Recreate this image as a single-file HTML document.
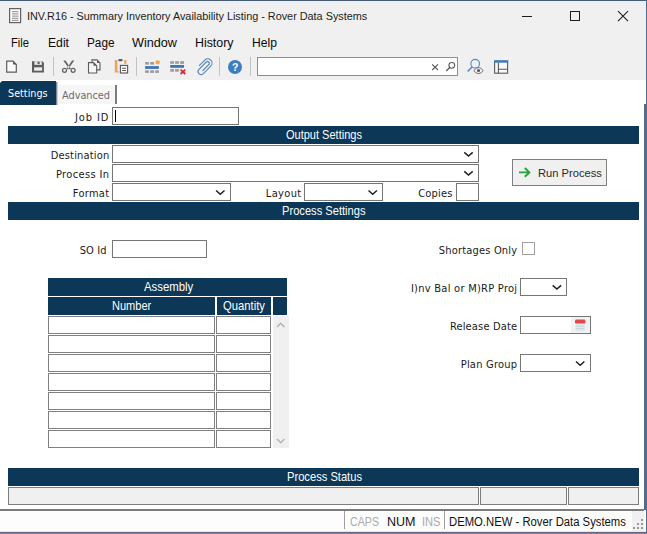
<!DOCTYPE html>
<html><head><meta charset="utf-8"><title>INV.R16 - Summary Inventory Availability Listing</title>
<style>
html,body{margin:0;padding:0}
body{width:647px;height:534px;position:relative;overflow:hidden;background:#f0f0f0;font-family:'Liberation Sans',sans-serif;font-size:12px;color:#111}
.a{position:absolute}
.t{position:absolute;white-space:nowrap;line-height:1;transform-origin:0 0;display:inline-block}
.bar{position:absolute;background:#0c3756;color:#fff;text-align:center;font-size:12px;line-height:18px;height:18px;white-space:nowrap}
.inp{position:absolute;background:#fff;border:1px solid #767676;box-sizing:border-box}
.cell{position:absolute;background:#fff;border:1px solid #808080;box-sizing:border-box;height:18px}
.sb{position:absolute;background:#f0f0f0;border:1px solid #7d7d7d;box-sizing:border-box;height:18px;top:487px}
.sep{position:absolute;width:1px;top:57px;height:19px;background:#c3c3c3}
</style></head><body>
<!-- window frame -->
<div class="a" style="left:0;top:0;width:647px;height:1px;background:#4a5b76"></div>
<div class="a" style="left:0;top:1px;width:646px;height:2px;background:#e9f0fa"></div>
<div class="a" style="left:643px;top:3px;width:2px;height:77px;background:#edf2ef"></div>
<div class="a" style="left:645px;top:3px;width:1px;height:77px;background:#e4eefa"></div>
<div class="a" style="left:646px;top:0;width:1px;height:534px;background:#4d6b9c"></div>

<!-- title bar icon + window controls -->
<svg class="a" style="left:8px;top:7px" width="15" height="17" viewBox="0 0 15 17"><rect x="1.600" y="1.600" width="11" height="14" fill="#fcfcfc" stroke="#606060" stroke-width="1.200"/><path d="M4 4.700h6.500M4 6.900h6.500M4 9.100h6.500M4 11.300h6.500M4 13.400h6.500" stroke="#8a8a8a" stroke-width="1"/></svg>
<svg class="a" style="left:516px;top:6px" width="120" height="20" viewBox="0 0 120 20"><path d="M6 10.500h10" stroke="#1e1e1e" stroke-width="1"/><rect x="54.500" y="5.500" width="9" height="9" fill="none" stroke="#1e1e1e" stroke-width="1"/><path d="M102 5.200l10 10M112 5.200l-10 10" stroke="#1e1e1e" stroke-width="1.100"/></svg>

<!-- toolbar icons -->
<div class="inp" style="left:257px;top:57px;width:201px;height:19px;border-color:#8e8e8e"></div>
<svg class="a" style="left:0;top:56px" width="520" height="22" viewBox="0 56 520 22">
 <!-- new -->
 <path d="M6.700 61.200h6.300l3.300 3.300v7.700h-9.600z" fill="#fbfbfb" stroke="#5c5c5c" stroke-width="1.200"/><path d="M13 61.200v3.300h3.300z" fill="#5c5c5c"/>
 <!-- save -->
 <path d="M32 61.200h10.400l1.500 1.500v9.800h-11.900z" fill="#5c5c5c"/><rect x="34.400" y="61.200" width="7.400" height="3.700" fill="#e6e6e6"/><rect x="37.600" y="61.700" width="2" height="2.400" fill="#5c5c5c"/><rect x="34.100" y="67.300" width="8" height="3.400" fill="#ededed"/>
 <!-- scissors -->
 <path d="M63.300 60.600l2.300 0l5.300 8.100l-1.200 .900zM74.300 60.600l-2.300 0l-5.300 8.100l1.200 .900z" fill="#626262"/><circle cx="64.500" cy="70.300" r="2" fill="none" stroke="#626262" stroke-width="1.200"/><circle cx="73.100" cy="70.300" r="2" fill="none" stroke="#626262" stroke-width="1.200"/>
 <!-- copy -->
 <path d="M92 59.900h5l3 3v7h-8z" fill="#f4f4f4" stroke="#5c5c5c" stroke-width="1.100"/><path d="M97 59.900v3h3z" fill="#5c5c5c"/>
 <path d="M88.500 62.600h5l3.200 3.200v7.200h-8.200z" fill="#f6f6f6" stroke="#5c5c5c" stroke-width="1.100"/><path d="M93.500 62.600v3.200h3.200z" fill="#5c5c5c"/>
 <!-- paste -->
 <path d="M114.800 60h2.600v11.300h1.400v1.200h-4z" fill="#eaa35c"/><rect x="124.200" y="60" width="2.200" height="3.800" fill="#eaa35c"/><rect x="118.300" y="59" width="4.300" height="2.300" rx="1" fill="#556070"/>
 <rect x="120.400" y="65.400" width="7.200" height="7.600" fill="#fafafa" stroke="#555" stroke-width="1.100"/><path d="M122.200 68.200h3.800M122.200 70.500h3.800" stroke="#555" stroke-width="1.100"/>
 <!-- grid insert -->
 <g fill="#9c9c9c"><rect x="145.100" y="62" width="3.800" height="2.600"/><rect x="150.200" y="62" width="3.800" height="2.600"/><rect x="145.100" y="70.300" width="3.800" height="2.600"/><rect x="150.200" y="70.300" width="3.800" height="2.600"/><rect x="155.100" y="70.300" width="3.800" height="2.600"/></g>
 <rect x="145.100" y="66.100" width="13.800" height="2.800" fill="#3f76b5"/><rect x="155.600" y="60.400" width="4" height="3.800" rx="0.800" fill="#f2a648"/>
 <!-- grid delete -->
 <g fill="#9c9c9c"><rect x="170.200" y="61.200" width="3.800" height="2.600"/><rect x="175.100" y="61.200" width="3.800" height="2.600"/><rect x="180.100" y="61.200" width="3.900" height="2.600"/><rect x="170.200" y="69.100" width="3.800" height="2.600"/><rect x="175.100" y="69.100" width="3.800" height="2.600"/></g>
 <rect x="170.200" y="65" width="13.800" height="2.800" fill="#3f76b5"/><path d="M180.500 69.700l4.800 4.300M185.300 69.700l-4.800 4.300" stroke="#d3283a" stroke-width="1.700"/>
 <!-- paperclip -->
 <path d="M202.500 70.800l6.300-6.300a1.700 1.700 0 0 0-2.500-2.500l-7.300 7.300a3 3 0 0 0 4.300 4.300l7.500-7.500a4.200 4.200 0 0 0-6-6l-5.800 5.800" fill="none" stroke="#5a86be" stroke-width="1.150"/>
 <!-- help -->
 <circle cx="235" cy="67" r="7" fill="#3d7ec0"/>
 <!-- search clear + magnifier -->
 <path d="M432.200 64.400l5.800 5.600M438 64.400l-5.800 5.600" stroke="#555" stroke-width="1.050"/>
 <circle cx="451.800" cy="65.300" r="2.900" fill="none" stroke="#555" stroke-width="1.050"/><path d="M449.700 67.500l-3.400 3.500" stroke="#555" stroke-width="1.250"/>
 <!-- find -->
 <circle cx="475.200" cy="63.700" r="4.300" fill="none" stroke="#5689cb" stroke-width="1.150"/><path d="M472 67l-4.300 4.500" stroke="#5689cb" stroke-width="1.600"/>
 <path d="M473.800 70.600q4.700-6 9.400 0q-4.700 6-9.400 0z" fill="#fbfbfb" stroke="#6a6a6a" stroke-width="1"/><circle cx="478.500" cy="70.600" r="1.600" fill="#5a5a5a"/>
 <!-- layout -->
 <rect x="494.600" y="61.200" width="13" height="12" fill="#f8f8f8" stroke="#5a5a5a" stroke-width="1.100"/><rect x="494" y="60.300" width="14.200" height="2.400" fill="#3a7bbf"/><path d="M498.400 62.700v10.500M498.400 69.300h9.200" stroke="#5a5a5a" stroke-width="1.100"/>
</svg>
<div class="sep" style="left:53px"></div>
<div class="sep" style="left:136px"></div>
<div class="sep" style="left:219px"></div>
<div class="sep" style="left:250px"></div>

<!-- content -->
<div class="a" style="left:0;top:80px;width:644px;height:429px;background:#fff"></div>
<div class="a" style="left:644px;top:80px;width:2px;height:24px;background:#fff"></div>
<div class="a" style="left:644px;top:104px;width:1px;height:406px;background:#5d6c7c"></div>
<div class="a" style="left:645px;top:104px;width:1px;height:406px;background:#546b8e"></div>

<!-- tabs -->
<div class="a" style="left:0;top:81px;width:56px;height:24px;background:#0c3756;clip-path:polygon(2px 0,100% 0,100% 100%,0 100%,0 2px)"></div>
<div class="a" style="left:56px;top:82px;width:1px;height:23px;background:#7f8991"></div>
<div class="a" style="left:57px;top:82px;width:1px;height:23px;background:#ccd0d4"></div>
<div class="a" style="left:58px;top:85px;width:57px;height:19px;background:#f6f6f6"></div>
<div class="a" style="left:115px;top:85px;width:2px;height:19px;background:#7c7c7c"></div>

<!-- Job ID -->
<div class="inp" style="left:112px;top:107px;width:127px;height:18px"></div>
<div class="a" style="left:115px;top:110px;width:1px;height:12px;background:#000"></div>

<div class="bar" style="left:8px;top:126px;width:631px"></div>
<div class="inp" style="left:112px;top:145px;width:367px;height:18px"></div>
<div class="inp" style="left:112px;top:164px;width:367px;height:18px"></div>
<div class="inp" style="left:112px;top:183px;width:119px;height:18px"></div>
<div class="inp" style="left:304px;top:183px;width:79px;height:18px"></div>
<div class="inp" style="left:456px;top:183px;width:23px;height:18px"></div>
<div class="bar" style="left:8px;top:202px;width:631px"></div>

<!-- run process -->
<div class="a" style="left:512px;top:159px;width:95px;height:27px;background:#f0f0f0;border:1px solid #7f7f7f;box-sizing:border-box"></div>
<svg class="a" style="left:518px;top:166px" width="14" height="13" viewBox="0 0 14 13"><path d="M1 6.400h10M6.800 2l4.600 4.400l-4.600 4.400" fill="none" stroke="#27a23a" stroke-width="1.900"/></svg>

<div class="inp" style="left:112px;top:240px;width:95px;height:18px"></div>
<div class="inp" style="left:522px;top:242px;width:13px;height:13px;border-color:#a0a0a0"></div>
<div class="inp" style="left:520px;top:278px;width:47px;height:18px"></div>
<div class="inp" style="left:520px;top:316px;width:71px;height:18px"></div>
<div class="inp" style="left:520px;top:354px;width:71px;height:18px"></div>
<!-- calendar -->
<div class="a" style="left:571px;top:317px;width:19px;height:16px;background:#f1f2f4"></div>
<svg class="a" style="left:574px;top:318px" width="13" height="14" viewBox="0 0 13 14"><rect x="1.500" y="4" width="9.500" height="9.300" fill="#e2e7eb"/><rect x="1" y="1.600" width="10.400" height="3.800" rx="1.200" fill="#e0484d"/><path d="M2.500 8h7.500M2.500 10.500h7.500" stroke="#c5d3db" stroke-width="1"/></svg>

<!-- chevrons -->
<svg class="a" style="left:0;top:140px" width="647" height="240" viewBox="0 140 647 240"><g fill="none" stroke="#1f1f1f" stroke-width="1.500">
<path d="M464.3 152.4l4.200 3.700l4.200-3.700"/>
<path d="M464.3 171.4l4.200 3.700l4.200-3.700"/>
<path d="M216.1 190.5l4.200 3.700l4.200-3.700"/>
<path d="M368.5 190.5l4.200 3.700l4.200-3.700"/>
<path d="M552.7 285.4l4.200 3.700l4.200-3.700"/>
<path d="M576.0 361.5l4.200 3.700l4.200-3.700"/>
</g></svg>

<!-- assembly table -->
<div class="bar" style="left:48px;top:278px;width:239px"></div>
<div class="bar" style="left:48px;top:297px;width:167px"></div>
<div class="bar" style="left:217px;top:297px;width:54px"></div>
<div class="bar" style="left:273px;top:297px;width:14px"></div>
<div class="a" style="left:273px;top:316px;width:16px;height:132px;background:#f0f0f0"></div>
<svg class="a" style="left:275px;top:320px" width="12" height="126" viewBox="0 0 12 126"><g fill="none" stroke="#b4b4b4" stroke-width="1.600"><path d="M2 7l3.700-3.700l3.700 3.700"/><path d="M2 119l3.700 3.700l3.700-3.700"/></g></svg>
<div class="cell" style="left:48px;top:316px;width:167px"></div><div class="cell" style="left:216px;top:316px;width:55px"></div>
<div class="cell" style="left:48px;top:335px;width:167px"></div><div class="cell" style="left:216px;top:335px;width:55px"></div>
<div class="cell" style="left:48px;top:354px;width:167px"></div><div class="cell" style="left:216px;top:354px;width:55px"></div>
<div class="cell" style="left:48px;top:373px;width:167px"></div><div class="cell" style="left:216px;top:373px;width:55px"></div>
<div class="cell" style="left:48px;top:392px;width:167px"></div><div class="cell" style="left:216px;top:392px;width:55px"></div>
<div class="cell" style="left:48px;top:411px;width:167px"></div><div class="cell" style="left:216px;top:411px;width:55px"></div>
<div class="cell" style="left:48px;top:430px;width:167px"></div><div class="cell" style="left:216px;top:430px;width:55px"></div>

<!-- process status -->
<div class="bar" style="left:8px;top:468px;width:631px"></div>
<div class="sb" style="left:8px;width:471px"></div>
<div class="sb" style="left:480px;width:87px"></div>
<div class="sb" style="left:568px;width:71px"></div>

<!-- bottom status bar -->
<div class="a" style="left:0;top:509px;width:644px;height:2px;background:#7b7b7b"></div>
<div class="a" style="left:0;top:511px;width:646px;height:21px;background:#fdfdfd"></div>
<div class="a" style="left:632px;top:511px;width:12px;height:21px;background:#f0f0f0"></div>
<div class="a" style="left:0;top:531px;width:646px;height:1px;background:#e6e6f1"></div>
<div class="a" style="left:0;top:532px;width:647px;height:1px;background:#68627f"></div>
<div class="a" style="left:0;top:533px;width:647px;height:1px;background:#85809d"></div>
<div class="a" style="left:344px;top:511px;width:1px;height:18px;background:#a0a0a0"></div>
<div class="a" style="left:444px;top:511px;width:1px;height:18px;background:#a0a0a0"></div>
<svg class="a" style="left:632px;top:518px" width="12" height="12" viewBox="0 0 12 12"><g fill="#9b9b9b"><rect x="9" y="1" width="2" height="2"/><rect x="5" y="5" width="2" height="2"/><rect x="9" y="5" width="2" height="2"/><rect x="1" y="9" width="2" height="2"/><rect x="5" y="9" width="2" height="2"/><rect x="9" y="9" width="2" height="2"/></g></svg>

<span class="t" id="t0" style="left:27.3px;top:11.2px;font-family:'Liberation Sans',sans-serif;font-size:11px;color:#1c1c1c;transform:scaleX(0.9849)">INV.R16 - Summary Inventory Availability Listing - Rover Data Systems</span>
<span class="t" id="t1" style="left:11.2px;top:36.8px;font-family:'Liberation Sans',sans-serif;font-size:12.3px;color:#0a0a0a;transform:scaleX(0.9078)">File</span>
<span class="t" id="t2" style="left:47.5px;top:36.8px;font-family:'Liberation Sans',sans-serif;font-size:12.3px;color:#0a0a0a;transform:scaleX(0.9904)">Edit</span>
<span class="t" id="t3" style="left:86.5px;top:36.8px;font-family:'Liberation Sans',sans-serif;font-size:12.3px;color:#0a0a0a;transform:scaleX(0.9576)">Page</span>
<span class="t" id="t4" style="left:131.5px;top:36.8px;font-family:'Liberation Sans',sans-serif;font-size:12.3px;color:#0a0a0a;transform:scaleX(1.0286)">Window</span>
<span class="t" id="t5" style="left:194.5px;top:36.8px;font-family:'Liberation Sans',sans-serif;font-size:12.3px;color:#0a0a0a;transform:scaleX(1.0061)">History</span>
<span class="t" id="t6" style="left:252.0px;top:36.8px;font-family:'Liberation Sans',sans-serif;font-size:12.3px;color:#0a0a0a;transform:scaleX(0.9843)">Help</span>
<span class="t" id="t7" style="left:8.1px;top:88.0px;font-family:'DejaVu Sans Condensed','Liberation Sans',sans-serif;font-size:11px;color:#fff;transform:scaleX(0.9751)">Settings</span>
<span class="t" id="t8" style="left:61.6px;top:89.7px;font-family:'DejaVu Sans Condensed','Liberation Sans',sans-serif;font-size:11px;color:#6b6b6b;transform:scaleX(0.9821)">Advanced</span>
<span class="t" id="t9" style="left:75.0px;top:112.0px;font-family:'DejaVu Sans Condensed','Liberation Sans',sans-serif;font-size:11px;color:#1a1a1a;letter-spacing:0.910px">Job ID</span>
<span class="t" id="t10" style="left:50.7px;top:150.4px;font-family:'DejaVu Sans Condensed','Liberation Sans',sans-serif;font-size:11px;color:#1a1a1a;letter-spacing:0.173px">Destination</span>
<span class="t" id="t11" style="left:55.9px;top:169.3px;font-family:'DejaVu Sans Condensed','Liberation Sans',sans-serif;font-size:11px;color:#1a1a1a;letter-spacing:0.367px">Process In</span>
<span class="t" id="t12" style="left:72.8px;top:188.3px;font-family:'DejaVu Sans Condensed','Liberation Sans',sans-serif;font-size:11px;color:#1a1a1a;letter-spacing:0.298px">Format</span>
<span class="t" id="t13" style="left:265.8px;top:188.3px;font-family:'DejaVu Sans Condensed','Liberation Sans',sans-serif;font-size:11px;color:#1a1a1a;letter-spacing:0.343px">Layout</span>
<span class="t" id="t14" style="left:418.2px;top:188.3px;font-family:'DejaVu Sans Condensed','Liberation Sans',sans-serif;font-size:11px;color:#1a1a1a;letter-spacing:0.175px">Copies</span>
<span class="t" id="t15" style="left:79.7px;top:244.5px;font-family:'DejaVu Sans Condensed','Liberation Sans',sans-serif;font-size:11px;color:#1a1a1a;letter-spacing:0.136px">SO Id</span>
<span class="t" id="t16" style="left:438.8px;top:245.0px;font-family:'DejaVu Sans Condensed','Liberation Sans',sans-serif;font-size:11px;color:#1a1a1a;letter-spacing:0.181px">Shortages Only</span>
<span class="t" id="t17" style="left:410.9px;top:282.8px;font-family:'DejaVu Sans Condensed','Liberation Sans',sans-serif;font-size:11px;color:#1a1a1a;letter-spacing:0.265px">I)nv Bal or M)RP Proj</span>
<span class="t" id="t18" style="left:449.9px;top:320.8px;font-family:'DejaVu Sans Condensed','Liberation Sans',sans-serif;font-size:11px;color:#1a1a1a;letter-spacing:0.165px">Release Date</span>
<span class="t" id="t19" style="left:460.7px;top:359.2px;font-family:'DejaVu Sans Condensed','Liberation Sans',sans-serif;font-size:11px;color:#1a1a1a;letter-spacing:0.229px">Plan Group</span>
<span class="t" id="t20" style="left:538.1px;top:166.7px;font-family:'Liberation Sans',sans-serif;font-size:11.7px;color:#2a2a2a;transform:scaleX(0.9548)">Run Process</span>
<span class="t" id="t21" style="left:350.0px;top:516.0px;font-family:'Liberation Sans',sans-serif;font-size:12px;color:#a9a9a9;transform:scaleX(0.8872)">CAPS</span>
<span class="t" id="t22" style="left:387.0px;top:516.0px;font-family:'Liberation Sans',sans-serif;font-size:12px;color:#111;transform:scaleX(1.0429)">NUM</span>
<span class="t" id="t23" style="left:422.0px;top:516.0px;font-family:'Liberation Sans',sans-serif;font-size:12px;color:#a9a9a9;transform:scaleX(0.9243)">INS</span>
<span class="t" id="t24" style="left:449.1px;top:516.0px;font-family:'Liberation Sans',sans-serif;font-size:12px;color:#111;transform:scaleX(0.9408)">DEMO.NEW - Rover Data Systems</span>
<span class="t" id="t25" style="left:285.6px;top:129.1px;font-family:'Liberation Sans',sans-serif;font-size:12.2px;color:#fff;transform:scaleX(0.9034)">Output Settings</span>
<span class="t" id="t26" style="left:282.0px;top:204.7px;font-family:'Liberation Sans',sans-serif;font-size:12.2px;color:#fff;transform:scaleX(0.9130)">Process Settings</span>
<span class="t" id="t27" style="left:144.0px;top:281.4px;font-family:'Liberation Sans',sans-serif;font-size:12.2px;color:#fff;transform:scaleX(0.9313)">Assembly</span>
<span class="t" id="t28" style="left:111.8px;top:299.9px;font-family:'Liberation Sans',sans-serif;font-size:12.2px;color:#fff;transform:scaleX(0.9041)">Number</span>
<span class="t" id="t29" style="left:222.7px;top:299.9px;font-family:'Liberation Sans',sans-serif;font-size:12.2px;color:#fff;transform:scaleX(0.9231)">Quantity</span>
<span class="t" id="t30" style="left:287.0px;top:471.0px;font-family:'Liberation Sans',sans-serif;font-size:12.2px;color:#fff;transform:scaleX(0.9150)">Process Status</span>
<span class="t" id="t31" style="left:231.8px;top:61.5px;font-family:'Liberation Sans',sans-serif;font-size:11.5px;color:#fff;font-weight:bold;transform:scaleX(0.9102)">?</span>
</body></html>
